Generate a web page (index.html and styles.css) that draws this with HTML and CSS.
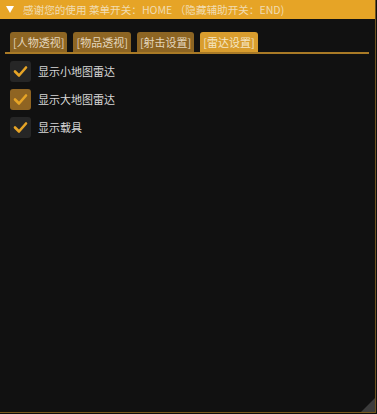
FILE: index.html
```html
<!DOCTYPE html>
<html lang="zh">
<head>
    <meta charset="UTF-8">
    <title>菜单</title>
    <link rel="stylesheet" href="styles.css">
</head>
<body>
    <div class="window">
        <div class="title-bar">
            <span class="arrow"></span>
            <span class="title">感谢您的使用 菜单开关：HOME （隐藏辅助开关：END)</span>
        </div>
        <div class="content">
            <div class="tabs">
                <div class="tab">[人物透视]</div>
                <div class="tab">[物品透视]</div>
                <div class="tab">[射击设置]</div>
                <div class="tab active">[雷达设置]</div>
            </div>
            <div class="options">
                <label class="option">
                    <span class="box"><svg viewBox="0 0 21 21"><path d="M5 10.5 L9 14.5 L16 6.5" /></svg></span>
                    显示小地图雷达
                </label>
                <label class="option">
                    <span class="box hover"><svg viewBox="0 0 21 21"><path d="M5 10.5 L9 14.5 L16 6.5" /></svg></span>
                    显示大地图雷达
                </label>
                <label class="option">
                    <span class="box"><svg viewBox="0 0 21 21"><path d="M5 10.5 L9 14.5 L16 6.5" /></svg></span>
                    显示载具
                </label>
            </div>
        </div>
        <div class="grip"></div>
    </div>
</body>
</html>
```

FILE: styles.css
```css
html, body {
    margin: 0;
    padding: 0;
    background: #0f0f0f;
}
body {
    font-family: "Noto Sans CJK SC", "Noto Sans", sans-serif;
    font-size: 11px;
}
.window {
    position: relative;
    width: 376px;
    height: 413px;
    box-sizing: border-box;
    background: #111111;
    border-right: 1px solid #6e5220;
    border-bottom: 1px solid #7a5a1e;
    display: flex;
    flex-direction: column;
}
.title-bar {
    height: 19px;
    background: #e6a426;
    display: flex;
    align-items: center;
    padding-left: 6px;
    color: #f1dcb2;
}
.arrow {
    width: 0;
    height: 0;
    border-left: 4px solid transparent;
    border-right: 4px solid transparent;
    border-top: 7px solid #ffffff;
    margin-right: 9px;
}
.title {
    line-height: 19px;
    white-space: nowrap;
    font-size: 10.6px;
}
.content {
    padding: 13px 6px 0 5px;
}
.tabs {
    display: flex;
    gap: 6px;
    padding-left: 5px;
    border-bottom: 2px solid #a97a26;
}
.tab {
    height: 20px;
    line-height: 20px;
    padding: 0 3px;
    background: #8d6523;
    color: #e4d6bd;
    border-radius: 3px 3px 0 0;
}
.tab.active {
    background: #d99d2e;
    color: #f5e6c4;
}
.options {
    display: flex;
    flex-direction: column;
    gap: 6px;
    padding: 6px 0 0 5px;
}
.option {
    display: flex;
    align-items: center;
    gap: 7px;
    color: #d8d8d8;
    height: 22px;
}
.box {
    width: 21px;
    height: 21px;
    border-radius: 3px;
    background: #262626;
    display: flex;
}
.box.hover {
    background: #8f6422;
}
.box svg {
    width: 21px;
    height: 21px;
}
.box path {
    fill: none;
    stroke: #e6a426;
    stroke-width: 2.6;
    stroke-linecap: round;
    stroke-linejoin: round;
}
.grip {
    position: absolute;
    right: 0;
    bottom: 0;
    width: 0;
    height: 0;
    border-left: 14px solid transparent;
    border-bottom: 14px solid #3c3c3c;
}
```
